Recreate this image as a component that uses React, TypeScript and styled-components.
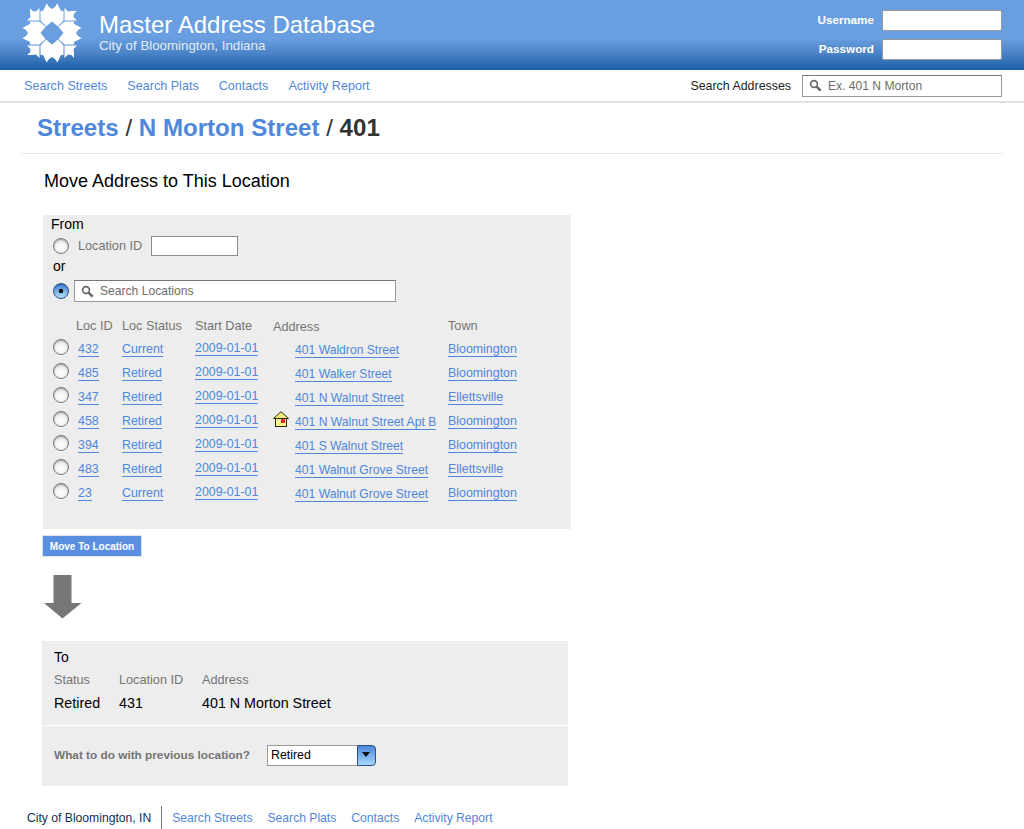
import React from 'react'
import styled, { createGlobalStyle } from 'styled-components'

const navItems = ['Search Streets', 'Search Plats', 'Contacts', 'Activity Report']

interface LocationRow {
    id: string,
    status: string,
    date: string,
    address: string,
    town: string,
    current?: boolean
}

const locations: LocationRow[] = [
    { id: '432', status: 'Current', date: '2009-01-01', address: '401 Waldron Street', town: 'Bloomington' },
    { id: '485', status: 'Retired', date: '2009-01-01', address: '401 Walker Street', town: 'Bloomington' },
    { id: '347', status: 'Retired', date: '2009-01-01', address: '401 N Walnut Street', town: 'Ellettsville' },
    { id: '458', status: 'Retired', date: '2009-01-01', address: '401 N Walnut Street Apt B', town: 'Bloomington', current: true },
    { id: '394', status: 'Retired', date: '2009-01-01', address: '401 S Walnut Street', town: 'Bloomington' },
    { id: '483', status: 'Retired', date: '2009-01-01', address: '401 Walnut Grove Street', town: 'Ellettsville' },
    { id: '23', status: 'Current', date: '2009-01-01', address: '401 Walnut Grove Street', town: 'Bloomington' }
]

const Logo = () => (
    <LogoSvg viewBox='0 0 60 60' width='60' height='60'>
        {[0, 90, 180, 270].map(angle => (
            <g key={angle} transform={`rotate(${angle} 30 30)`} fill='#fff'>
                <polygon points='18.5,17.5 18.5,8 21,8 24.7,0.5 27,4 30,6 33,4 35.3,0.5 39,8 41.5,8 41.5,17.5 36,23.5 30,18.5 24,23.5' />
                <polygon points='17.5,17.5 17.5,5 14,8.5 10.5,8 8,5 8,10.5 8.5,14 5,17.5' />
            </g>
        ))}
    </LogoSvg>
)

const Magnifier = () => (
    <svg width='13' height='13' viewBox='0 0 13 13'>
        <circle cx='5' cy='5' r='3.4' fill='none' stroke='#666' strokeWidth='1.6' />
        <line x1='7.6' y1='7.6' x2='11.6' y2='11.6' stroke='#666' strokeWidth='2.6' />
    </svg>
)

const House = () => (
    <svg width='16' height='16' viewBox='0 0 16 16'>
        <rect x='2.5' y='7.5' width='11' height='8' fill='#fbf38c' stroke='#2a2a10' strokeWidth='1' />
        <polygon points='8,0.7 15.5,7.5 0.5,7.5' fill='#f6ee7a' stroke='#2a2a10' strokeWidth='1' />
        <rect x='8' y='8' width='4' height='4' fill='#e8262a' />
    </svg>
)

const Arrow = () => (
    <ArrowSvg width='38' height='44' viewBox='0 0 38 44'>
        <polygon points='9.5,0 27.5,0 27.5,28 37.5,28 18.5,43.5 0,28 9.5,28' fill='#777' />
    </ArrowSvg>
)

const App: React.FC = () => {
    return (
        <Page>
            <GlobalStyle />
            <Header>
                <Brand>
                    <Logo />
                    <BrandText>
                        <h1>Master Address Database</h1>
                        <p>City of Bloomington, Indiana</p>
                    </BrandText>
                </Brand>
                <Login>
                    <label><span>Username</span> <HeaderInput /></label>
                    <label><span>Password</span> <HeaderInput type='password' /></label>
                </Login>
            </Header>

            <Nav>
                <NavLinks>
                    {navItems.map(item => <a key={item} href='#'>{item}</a>)}
                </NavLinks>
                <NavSearch>
                    Search Addresses
                    <SearchBox $width={200}>
                        <Magnifier />
                        <input placeholder='Ex. 401 N Morton' />
                    </SearchBox>
                </NavSearch>
            </Nav>

            <Crumbs>
                <a href='#'>Streets</a> <i>/</i> <a href='#'>N Morton Street</a> <i>/</i> 401
            </Crumbs>

            <Main>
                <h2>Move Address to This Location</h2>

                <FromPanel>
                    <PanelTitle>From</PanelTitle>
                    <ChoiceRow $gap={9}>
                        <Radio />
                        <GreyLabel>Location ID</GreyLabel>
                        <IdInput />
                    </ChoiceRow>
                    <OrText>or</OrText>
                    <ChoiceRow $gap={5}>
                        <Radio $checked />
                        <SearchBox $width={322}>
                            <Magnifier />
                            <input placeholder='Search Locations' />
                        </SearchBox>
                    </ChoiceRow>

                    <TableHead>
                        <span />
                        <GreyLabel>Loc ID</GreyLabel>
                        <GreyLabel>Loc Status</GreyLabel>
                        <GreyLabel>Start Date</GreyLabel>
                        <AddressHead>Address</AddressHead>
                        <GreyLabel>Town</GreyLabel>
                    </TableHead>
                    {locations.map(loc => (
                        <TableRow key={loc.id + loc.town}>
                            <RowRadio />
                            <RowLink href='#' $inset={2}>{loc.id}</RowLink>
                            <RowLink href='#'>{loc.status}</RowLink>
                            <RowLink href='#' $lift={1}>{loc.date}</RowLink>
                            <AddressCell>
                                <HouseSlot>{loc.current && <House />}</HouseSlot>
                                <AddressLink href='#' $drop={1}>{loc.address}</AddressLink>
                            </AddressCell>
                            <RowLink href='#'>{loc.town}</RowLink>
                        </TableRow>
                    ))}
                </FromPanel>

                <MoveButton>Move To Location</MoveButton>
                <Arrow />

                <ToPanel>
                    <ToSummary>
                        <PanelTitle>To</PanelTitle>
                        <ToGrid>
                            <GreyLabel>Status</GreyLabel>
                            <GreyLabel>Location ID</GreyLabel>
                            <GreyLabel>Address</GreyLabel>
                            <strong>Retired</strong>
                            <strong>431</strong>
                            <strong>401 N Morton Street</strong>
                        </ToGrid>
                    </ToSummary>
                    <ToAction>
                        <GreyLabel>What to do with previous location?</GreyLabel>
                        <FakeSelect>
                            <span>Retired</span>
                            <SelectButton />
                        </FakeSelect>
                    </ToAction>
                </ToPanel>
            </Main>

            <Footer>
                <FooterCity>City of Bloomington, IN</FooterCity>
                <FooterLinks>
                    {navItems.map(item => <a key={item} href='#'>{item}</a>)}
                </FooterLinks>
            </Footer>
        </Page>
    )
}

const GlobalStyle = createGlobalStyle`
    html, body {
        margin: 0;
        padding: 0;
        background: #fff;
    }
    body {
        font-family: "Liberation Sans", Arial, sans-serif;
        font-size: 12.4px;
        color: #000;
    }
    a {
        color: #4f87dc;
        text-decoration: none;
    }
`

const Page = styled.div`
    width: 1024px;
    height: 829px;
    overflow: hidden;
`

const Header = styled.header`
    height: 70px;
    box-sizing: border-box;
    padding: 0 22px;
    display: flex;
    justify-content: space-between;
    background: linear-gradient(#699fe0 0, #699fe0 38px, #4f86c9 52px, #1a5fa8 70px);
`

const Brand = styled.div`
    display: flex;
    gap: 17px;
`

const LogoSvg = styled.svg`
    margin-top: 3px;
`

const BrandText = styled.div`
    color: #fff;
    padding-top: 11px;

    h1 {
        margin: 0;
        font-size: 24px;
        line-height: 27px;
        font-weight: normal;
    }

    p {
        margin: 0;
        font-size: 13.3px;
        line-height: 16px;
        color: #e2ecf8;
    }
`

const Login = styled.div`
    padding-top: 10px;
    display: flex;
    flex-direction: column;
    gap: 8px;

    label {
        display: flex;
        justify-content: flex-end;
        align-items: center;
        gap: 8px;
        font-size: 11.7px;
        font-weight: bold;
        color: #fff;
    }

    span {
        padding-bottom: 2px;
    }
`

const HeaderInput = styled.input`
    width: 120px;
    height: 21px;
    box-sizing: border-box;
    padding: 0 4px;
    background: #fff;
    border: 1px solid #9a9a9a;
    border-radius: 2px;
`

const Nav = styled.nav`
    height: 33px;
    box-sizing: border-box;
    padding: 0 22px 0 24px;
    display: flex;
    justify-content: space-between;
    align-items: center;
    border-bottom: 2px solid #e2e2e2;
`

const NavLinks = styled.div`
    display: flex;
    gap: 20px;
    font-size: 12.6px;
`

const NavSearch = styled.div`
    display: flex;
    align-items: center;
    gap: 11px;
    color: #222;
`

const SearchBox = styled.div<{ $width: number }>`
    width: ${p => p.$width}px;
    height: 22px;
    box-sizing: border-box;
    padding-left: 6px;
    display: flex;
    align-items: center;
    gap: 6px;
    background: #fff;
    border: 1px solid #999;
    border-top-color: #777;

    input {
        flex: 1;
        min-width: 0;
        padding: 0;
        border: 0;
        outline: 0;
        background: none;
        font: inherit;
        font-size: 12.1px;
    }

    input::placeholder {
        color: #6c6c6c;
        opacity: 1;
    }
`

const Crumbs = styled.div`
    margin: 9px 22px 0;
    padding: 0 15px 9px;
    height: 32px;
    border-bottom: 1px solid #e8e8e8;
    font-size: 24.1px;
    line-height: 32px;
    font-weight: bold;
    color: #333;

    i {
        font-style: normal;
        font-weight: normal;
    }
`

const Main = styled.main`
    padding-left: 42px;

    h2 {
        margin: 0;
        padding: 17px 0 0 2px;
        height: 44px;
        box-sizing: content-box;
        font-size: 18px;
        line-height: 20px;
        font-weight: normal;
    }
`

const FromPanel = styled.section`
    margin-left: 1px;
    width: 528px;
    height: 314px;
    box-sizing: border-box;
    padding: 1px 8px 0;
    background: #ededed;
`

const PanelTitle = styled.div`
    font-size: 14px;
    line-height: 17px;
    margin-bottom: 1px;
`

const ChoiceRow = styled.div<{ $gap: number }>`
    display: flex;
    align-items: center;
    gap: ${p => p.$gap}px;
    margin-left: 2px;
    height: 24px;
`

const OrText = styled.div`
    margin: 0 0 4px 2px;
    font-size: 14px;
    line-height: 17px;
`

const Radio = styled.span<{ $checked?: boolean }>`
    flex: none;
    display: block;
    width: 16px;
    height: 16px;
    box-sizing: border-box;
    border-radius: 50%;
    border: 1px solid ${p => p.$checked ? '#2a4f86' : '#777'};
    box-shadow: inset 0 1px 1px rgba(0, 0, 0, 0.25);
    background: ${p => p.$checked
        ? 'radial-gradient(circle at 50% 50%, #111 0, #111 2px, transparent 2.5px), linear-gradient(#3f7fd8, #b4e0fb)'
        : 'radial-gradient(circle at 50% 65%, #fff 0, #f2f2f2 45%, #c8c8c8 100%)'};
`

const RowRadio = styled(Radio)`
    margin-left: 2px;
`

const GreyLabel = styled.span`
    color: #747474;
    font-size: 12.7px;
    white-space: nowrap;
`

const IdInput = styled.input`
    width: 87px;
    height: 20px;
    box-sizing: border-box;
    background: #fff;
    border: 1px solid #8c8c8c;
`

const columns = '25px 46px 73px 78px 175px 1fr'

const TableHead = styled.div`
    display: grid;
    grid-template-columns: ${columns};
    margin-top: 16px;
    height: 20px;
`

const AddressHead = styled(GreyLabel)`
    padding-top: 1px;
`

const TableRow = styled.div`
    display: grid;
    grid-template-columns: ${columns};
    height: 24px;
    align-items: start;
`

const RowLink = styled.a<{ $inset?: number, $lift?: number, $drop?: number }>`
    justify-self: start;
    line-height: 14px;
    border-bottom: 1px solid #4f87dc;
    margin-left: ${p => p.$inset ?? 0}px;
    margin-top: ${p => 3 - (p.$lift ?? 0) + (p.$drop ?? 0)}px;
    white-space: nowrap;
`

const AddressLink = styled(RowLink)`
    font-size: 12.15px;
`

const AddressCell = styled.div`
    display: flex;
    align-items: flex-start;
`

const HouseSlot = styled.span`
    flex: none;
    width: 22px;
    height: 16px;
`

const MoveButton = styled.button`
    display: block;
    margin: 6px 0 0 0;
    width: 100px;
    height: 22px;
    padding: 0;
    border: 1px solid #dbe4f3;
    background: #5a8fdf;
    color: #fff;
    font: bold 10px "Liberation Sans", Arial, sans-serif;
`

const ArrowSvg = styled.svg`
    display: block;
    margin: 18px 0 22px 2px;
`

const ToPanel = styled.section`
    width: 526px;
    height: 145px;
    background: #ededed;
`

const ToSummary = styled.div`
    height: 85px;
    box-sizing: border-box;
    padding: 8px 12px 0;
    border-bottom: 1px solid #fff;
`

const ToGrid = styled.div`
    display: grid;
    grid-template-columns: 65px 83px 1fr;
    grid-template-rows: 22px 23px;
    margin-top: 3px;
    align-items: center;

    strong {
        font-size: 14.3px;
        font-weight: normal;
    }
`

const ToAction = styled.div`
    display: flex;
    align-items: center;
    gap: 17px;
    padding: 19px 12px 0;

    ${GreyLabel} {
        font-size: 11.8px;
        font-weight: bold;
        margin-bottom: 2px;
    }
`

const FakeSelect = styled.div`
    display: flex;
    width: 109px;
    height: 21px;
    box-sizing: border-box;

    span {
        flex: 1;
        padding-left: 3px;
        line-height: 19px;
        background: #fff;
        border: 1px solid #999;
        border-right: 0;
    }
`

const SelectButton = styled.i`
    position: relative;
    width: 17px;
    border: 1px solid #2a4f86;
    border-radius: 0 4px 4px 0;
    background: linear-gradient(#4a86dc, #a8d8fa);

    &::after {
        content: '';
        position: absolute;
        left: 4px;
        top: 6px;
        border: 4px solid transparent;
        border-top: 5px solid #111;
        border-bottom: 0;
    }
`

const Footer = styled.footer`
    margin-top: 20px;
    margin-left: 27px;
    display: flex;
    align-items: flex-start;
    height: 23px;
    font-size: 12.15px;
`

const FooterCity = styled.div`
    color: #0f2f55;
    height: 23px;
    padding-right: 10px;
    line-height: 25px;
    border-right: 1px solid #777;
`

const FooterLinks = styled.div`
    display: flex;
    gap: 15px;
    margin-left: 10px;
    line-height: 25px;
`

export default App
